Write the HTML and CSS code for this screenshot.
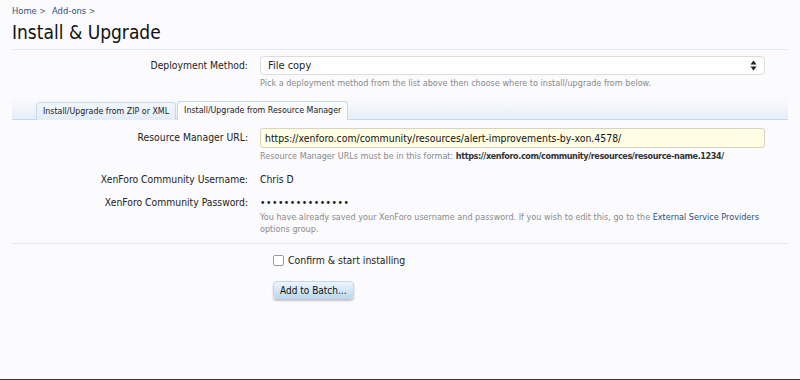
FILE: index.html
```html
<!DOCTYPE html>
<html lang="en">
<head>
    <meta charset="UTF-8">
    <title>Install &amp; Upgrade</title>
    <link rel="stylesheet" href="styles.css">
</head>
<body>
    <div class="page">
        <div class="breadcrumb">
            <a href="#">Home</a> <span class="arrow">&gt;</span>
            <a href="#">Add-ons</a> <span class="arrow">&gt;</span>
        </div>
        <h1>Install &amp; Upgrade</h1>

        <div class="form-row first">
            <div class="label">Deployment Method:</div>
            <div class="control">
                <div class="select">
                    <span>File copy</span>
                    <svg width="7" height="11" viewBox="0 0 7 11"><path d="M3.5 0.5 L6.5 4.5 H0.5 Z M3.5 10.5 L6.5 6.5 H0.5 Z" fill="#222"/></svg>
                </div>
                <p class="hint">Pick a deployment method from the list above then choose where to install/upgrade from below.</p>
            </div>
        </div>

        <div class="tabs">
            <span class="tab">Install/Upgrade from ZIP or XML</span>
            <span class="tab active">Install/Upgrade from Resource Manager</span>
        </div>

        <div class="form-row url-row">
            <div class="label">Resource Manager URL:</div>
            <div class="control">
                <div class="text-input">https://xenforo.com/community/resources/alert-improvements-by-xon.4578/</div>
                <p class="hint">Resource Manager URLs must be in this format: <b>https://xenforo.com/community/resources/resource-name.1234/</b></p>
            </div>
        </div>

        <div class="form-row">
            <div class="label">XenForo Community Username:</div>
            <div class="control value">Chris D</div>
        </div>

        <div class="form-row password-row">
            <div class="label">XenForo Community Password:</div>
            <div class="control">
                <div class="value dots">&bull;&bull;&bull;&bull;&bull;&bull;&bull;&bull;&bull;&bull;&bull;&bull;&bull;&bull;&bull;</div>
                <p class="hint">You have already saved your XenForo username and password. If you wish to edit this, go to the <a href="#">External Service Providers</a> options group.</p>
            </div>
        </div>

        <div class="submit-area">
            <label class="check"><span class="box"></span>Confirm &amp; start installing</label>
            <button class="button">Add to Batch...</button>
        </div>
    </div>
    <div class="bottom-edge"></div>
</body>
</html>
```

FILE: styles.css
```css
* {
    margin: 0;
    padding: 0;
    box-sizing: border-box;
}

html, body {
    height: 100%;
}

body {
    font-family: "DejaVu Sans Condensed", "DejaVu Sans", sans-serif;
    font-size: 10.3px;
    color: #1d1d1d;
    background-color: #fbfbfd;
    display: flex;
    flex-direction: column;
}

a {
    color: #22417a;
    text-decoration: none;
}

.page {
    flex: 1;
    padding: 0 12px;
}

.breadcrumb {
    padding-top: 4px;
    line-height: 14px;
    font-size: 9.3px;
}

.breadcrumb a {
    color: #2b4d7e;
}

.breadcrumb .arrow {
    color: #555;
    font-size: 8px;
    margin-right: 4px;
}

h1 {
    font-size: 19px;
    font-weight: normal;
    line-height: 24px;
    margin-top: 1px;
    padding-bottom: 5px;
    color: #111;
    border-bottom: 1px solid #e0eaf5;
}

/* rows of the form */
.form-row {
    display: grid;
    grid-template-columns: 236px 1fr;
    column-gap: 12px;
    padding-right: 23px;
    margin-top: 8px;
}

.form-row.first {
    margin-top: 6px;
}

.form-row .label {
    text-align: right;
    line-height: 19px;
    color: #222;
}

.control.value, .value {
    line-height: 19px;
}

.password-row {
    margin-top: 7px;
}

.password-row .label,
.password-row .dots {
    line-height: 13px;
}

.dots {
    letter-spacing: 0.5px;
}

.select {
    height: 19px;
    border: 1px solid #dcdcdc;
    border-radius: 4px;
    background-color: #fff;
    display: flex;
    align-items: center;
    justify-content: space-between;
    padding: 0 7px;
    font-size: 11px;
}

.text-input {
    height: 20px;
    border: 1px solid #d6d3c0;
    border-radius: 3px;
    background-color: #fffde3;
    padding: 0 4px;
    line-height: 18px;
    font-size: 10.4px;
    color: #111;
}

.hint {
    margin-top: 2px;
    font-size: 9px;
    line-height: 12px;
    color: #8a8a8a;
}

.hint b {
    color: #333;
    letter-spacing: -0.4px;
}

.hint a {
    color: #2b4d7e;
}

/* tabs */
.tabs {
    margin-top: 9px;
    height: 22px;
    padding: 4px 0 0 24px;
    display: flex;
    align-items: flex-end;
    background: linear-gradient(to bottom, #fbfbfd, #e6eef9);
    border-bottom: 1px solid #c7d8ea;
}

.tab {
    height: 18px;
    line-height: 16px;
    padding: 0 6px;
    font-size: 8.8px;
    color: #1a1a1a;
    border: 1px solid #c7d8ea;
    border-bottom: none;
    border-radius: 4px 4px 0 0;
    background: linear-gradient(to bottom, #f3f7fc, #e3ecf8);
    margin-bottom: -1px;
    margin-right: 1px;
}

.tab.active {
    height: 19px;
    background: #fbfbfd;
}

.url-row {
    margin-top: 8px;
}

.submit-area {
    margin-top: 8px;
    border-top: 1px solid #e0eaf5;
    padding: 8px 0 0 261px;
    display: flex;
    flex-direction: column;
    align-items: flex-start;
}

.check {
    display: flex;
    align-items: center;
    font-size: 10.4px;
    line-height: 16px;
    color: #222;
}

.check .box {
    width: 11px;
    height: 11px;
    border: 1px solid #999;
    border-radius: 2px;
    background: #fff;
    margin-right: 4px;
}

.button {
    margin-top: 13px;
    height: 18px;
    padding: 0 6px;
    font-family: inherit;
    font-size: 10px;
    color: #111;
    border: 1px solid #c2d7ea;
    border-radius: 4px;
    background: linear-gradient(to bottom, #eef5fc, #bcd8ef);
    box-shadow: 0 2px 2px rgba(90, 90, 120, 0.35);
}

.bottom-edge {
    height: 1px;
    background-color: #333;
}
```
